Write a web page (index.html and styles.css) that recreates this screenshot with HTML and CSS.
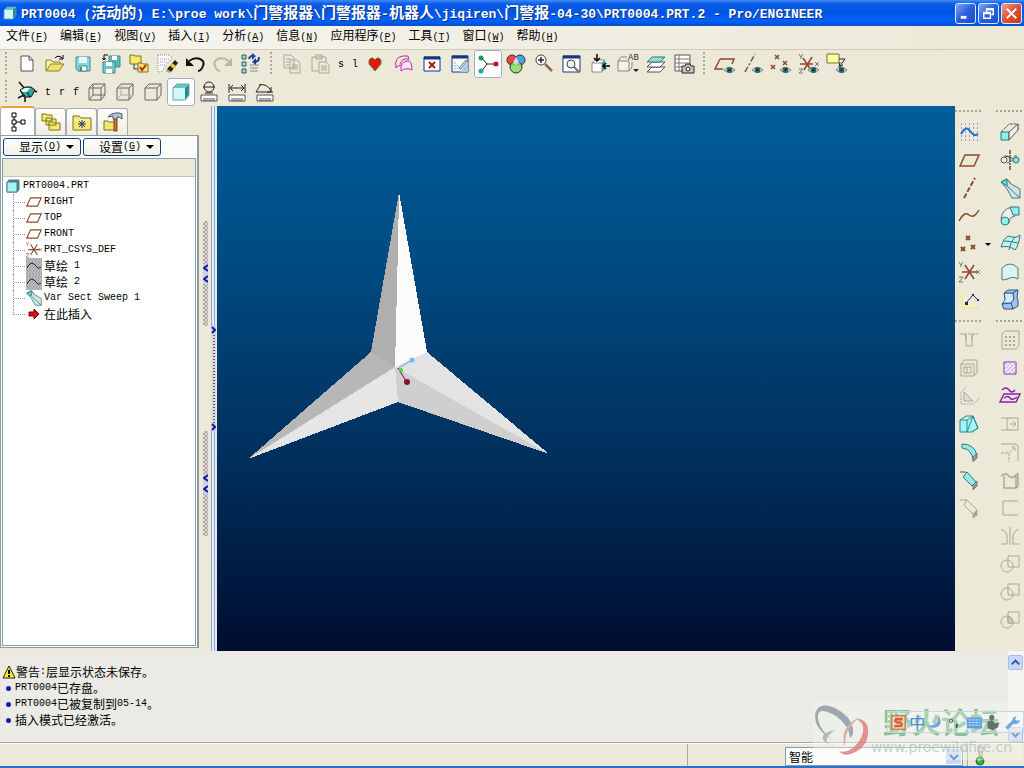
FILE: index.html
```html
<!DOCTYPE html>
<html lang="zh-CN">
<head>
  <meta charset="UTF-8">
  <meta name="viewport" content="width=device-width, initial-scale=1.0">
  <title>PRT0004 - Pro/ENGINEER</title>
  <link rel="stylesheet" href="styles.css">
</head>
<body>
  <!-- shared icons -->
  <svg class="defs" width="0" height="0">
    <symbol id="eye" viewBox="0 0 24 24"><path d="M11 18q5-5 11 0q-5 5-11 0z" fill="#fff" stroke="#777"/><circle cx="16.500" cy="18" r="3" fill="#266b66"/><circle cx="16.500" cy="18" r="1" fill="#012"/></symbol>
    <symbol id="plane" viewBox="0 0 24 24"><path d="M8 7h14l-5 11H3z" fill="none" stroke="#8a4a2c" stroke-width="1.500"/></symbol>
    <symbol id="csys" viewBox="0 0 24 24"><path d="M5 12h15M8 5l9 14M17 5L8 19" stroke="#8a4a2c" stroke-width="1.500" fill="none"/><path d="M2 2l2 3 2-3M4 5v2M19 10l4 4m0-4l-4 4M2 17h4l-4 5h4" stroke="#777" fill="none"/></symbol>
    <symbol id="cube" viewBox="0 0 24 24"><path d="M4 8h12v12H4zM4 8l4-4h12l-4 4M20 4v11l-4 5" fill="none" stroke="#666"/></symbol>
    <symbol id="solid" viewBox="0 0 24 24"><path d="M4 8l4-4h12l-4 4z" fill="#62c8c8"/><path d="M4 8h12v12H4z" fill="#d0f8f8"/><path d="M16 8l4-4v11l-4 5z" fill="#1f8f90"/><path d="M4 8l4-4h12v11l-4 5H4z" fill="none" stroke="#7a9aa4"/></symbol>
    <symbol id="ruler" viewBox="0 0 24 24"><path d="M4 15h16v6H4z" fill="#fff" stroke="#555"/><path d="M7 18v3M9 18v3M11 18v3M13 18v3M15 18v3M17 18v3" stroke="#555"/></symbol>
    <symbol id="folder" viewBox="0 0 24 24"><path d="M3 8V6h6l2 2h10v12H3z" fill="#f4e96c" stroke="#7a7421"/><path d="M4 10h16" stroke="#fffbd0"/></symbol>
    <symbol id="sketch" viewBox="0 0 16 16"><rect width="16" height="16" fill="#b8b8b8"/><path d="M1 1h15M0 3h16M1 5h15M0 7h16M1 9h15M0 11h16M1 13h15M0 15h16" stroke="#8c8c8c" stroke-dasharray="1 2"/><path d="M1 10q4-8 8-3t6 2" fill="none" stroke="#222"/></symbol>
    <symbol id="sweep" viewBox="0 0 24 24"><path d="M3 6l6-3 4 5 9 5v9h-8L9 13z" fill="#cbe6ea" stroke="#577"/><path d="M3 6l6-3v7z" fill="#5fdede" stroke="#377"/><path d="M9 10l13 12M9 3l4 5" stroke="#577" fill="none"/></symbol>
    <symbol id="boole" viewBox="0 0 24 24"><path d="M10 4h11v11H10z"/><circle cx="9" cy="14" r="6"/></symbol>
  </svg>

  <header class="titlebar">
    <svg class="app-icon" viewBox="0 0 24 24"><use href="#solid"/></svg>
    <h1>PRT0004 (<span class="zh">活动的</span>) E:\proe work\<span class="zh">门警报器</span>\<span class="zh">门警报器</span>-<span class="zh">机器人</span>\jiqiren\<span class="zh">门警报</span>-04-30\PRT0004.PRT.2 - Pro/ENGINEER</h1>
    <div class="win-buttons">
      <button aria-label="最小化"><svg viewBox="0 0 20 20"><path d="M5 14h6" stroke="#fff" stroke-width="3"/></svg></button>
      <button aria-label="还原"><svg viewBox="0 0 20 20"><path d="M5 9h7v6H5zM5 10h7M8 8V5h7v6h-2M8 6h7" fill="none" stroke="#fff" stroke-width="1.500"/></svg></button>
      <button class="close" aria-label="关闭"><svg viewBox="0 0 20 20"><path d="M5 5l10 10M15 5L5 15" stroke="#fff" stroke-width="2"/></svg></button>
    </div>
  </header>

  <nav class="menubar">
    <button><span class="zh">文件</span>(<u>F</u>)</button>
    <button><span class="zh">编辑</span>(<u>E</u>)</button>
    <button><span class="zh">视图</span>(<u>V</u>)</button>
    <button><span class="zh">插入</span>(<u>I</u>)</button>
    <button><span class="zh">分析</span>(<u>A</u>)</button>
    <button><span class="zh">信息</span>(<u>N</u>)</button>
    <button><span class="zh">应用程序</span>(<u>P</u>)</button>
    <button><span class="zh">工具</span>(<u>T</u>)</button>
    <button><span class="zh">窗口</span>(<u>W</u>)</button>
    <button><span class="zh">帮助</span>(<u>H</u>)</button>
  </nav>

  <div class="toolbars">
    <div class="toolbar">
      <i class="handle"></i>
      <button class="tool" aria-label="新建"><svg viewBox="0 0 24 24"><path d="M6 4h8l4 4v11H6z" fill="#fff" stroke="#555"/><path d="M14 4v4h4" fill="none" stroke="#555"/></svg></button>
      <button class="tool" aria-label="打开"><svg viewBox="0 0 24 24"><path d="M3 19V8h5l2 2h7v3" fill="#f7ee9a" stroke="#8a8130"/><path d="M3 19l5-7h13l-5 7z" fill="#f0e070" stroke="#8a8130"/><path d="M12 6q4-4 8 1M20 3v4h-4" fill="none" stroke="#000"/></svg></button>
      <button class="tool" aria-label="保存"><svg viewBox="0 0 24 24"><path d="M5 5h14v14H7l-2-2z" fill="#7fdce0" stroke="#4a8890"/><path d="M8 5h8v6H8z" fill="#e8f8f8"/><path d="M8 14h8v5H8z" fill="#fff" stroke="#4a8890"/><path d="M9 15h2v4H9z" fill="#4a8890"/></svg></button>
      <button class="tool" aria-label="保存副本"><svg viewBox="0 0 24 24"><path d="M10 4h11v11H10z" fill="#52b8bb" stroke="#4a8890"/><path d="M13 4h5v4h-5z" fill="#fff"/><path d="M4 10h12v11H4z" fill="#6cc8cc" stroke="#4a8890"/><path d="M7 10h6v4H7zM7 17h6v4H7z" fill="#fff"/><path d="M9 3H5v5M3 6l2 2 2-2" fill="none" stroke="#000"/></svg></button>
      <button class="tool" aria-label="设置工作目录"><svg viewBox="0 0 24 24"><path d="M3 12V3h4l1 1h6v8z" fill="#f4e96c" stroke="#7a7421"/><path d="M7 12v5h4" fill="none" stroke="#333"/><path d="M11 20v-9h4l1 1h5v8z" fill="#f4e96c" stroke="#7a7421"/><path d="M13 15l2 3 4-5" fill="none" stroke="#b22" stroke-width="2"/></svg></button>
      <button class="tool" aria-label="拭除"><svg viewBox="0 0 24 24"><path d="M3 3h11l3 3L6 20H3z" fill="#fafafa" stroke="#88a" stroke-dasharray="1 1"/><path d="M5 7h9M5 10h8M5 13h5" stroke="#99b" stroke-dasharray="1 1"/><path d="M20 8l3 3-7 9-4-3z" fill="#222"/><path d="M17 11l4 3-2 3-4-3z" fill="#e2c93a"/><path d="M12 17l4 3-2 1-3-2z" fill="#79c048"/></svg></button>
      <button class="tool" aria-label="撤消"><svg viewBox="0 0 24 24"><path d="M6 9q6-4 11-2t3 7-5 5" fill="none" stroke="#111" stroke-width="2"/><path d="M3 6v8h8z" fill="#111"/></svg></button>
      <button class="tool" aria-label="重做"><svg viewBox="0 0 24 24"><path d="M18 9Q12 5 7 7t-3 7 5 5" fill="none" stroke="#b9b6a8" stroke-width="2"/><path d="M21 6v8h-8z" fill="#b9b6a8"/></svg></button>
      <button class="tool" aria-label="再生"><svg viewBox="0 0 24 24"><path d="M3 3h4v4H3zM3 10h4v4H3zM3 17h4v4H3z" fill="#8fe0e0" stroke="#355"/><path d="M11 13h9M11 16h8M11 19h8" stroke="#888"/><path d="M10 7q1-4 5-3M20 5q0 5-5 5" fill="none" stroke="#1b3fa0" stroke-width="2"/><path d="M13 1l4 3-4 4zM17 6l-4 4 4 3z" fill="#1b3fa0"/></svg></button>
      <i class="handle"></i>
      <button class="tool" aria-label="复制"><svg viewBox="0 0 24 24" class="off"><path d="M4 3h7l3 3v10H4zM10 8h7l3 3v10H10z"/><path d="M6 7h5M6 10h3M6 13h3M12 13h6M12 15h6M12 17h6"/></svg></button>
      <button class="tool" aria-label="粘贴"><svg viewBox="0 0 24 24" class="off"><path d="M4 5h14v14H4zM8 3h6v4H8z"/><path d="M11 10h7l3 3v8H11zM13 14h6M13 16h6M13 18h6" fill="#ece9d8"/></svg></button>
      <button class="letter">s</button>
      <button class="letter">l</button>
      <button class="tool" aria-label="收藏"><svg viewBox="0 0 24 24"><path d="M11 19L5 12V8l2-2h2l2 2 2-2h2l2 2v4z" fill="#e8141c" stroke="#5a8a20"/></svg></button>
      <button class="tool" aria-label="曲面"><svg viewBox="0 0 24 24"><path d="M4 16Q2 5 11 4h5l1 4" fill="none" stroke="#c026a8"/><path d="M4 16q2-3 5-3M8 12q2-6 8-5" fill="none" stroke="#c026a8"/><path d="M9 19q-1-10 7-10 4 0 4 9-6-3-11 1z" fill="#f3e6f4" stroke="#c026a8"/></svg></button>
      <button class="tool" aria-label="关闭窗口"><svg viewBox="0 0 24 24"><path d="M4 5h16v14H4z" fill="#fff" stroke="#16357c"/><path d="M4 6h16" stroke="#16357c" stroke-width="3"/><path d="M9 10l6 6M15 10l-6 6" stroke="#a02010" stroke-width="2"/></svg></button>
      <button class="tool" aria-label="重画"><svg viewBox="0 0 24 24"><path d="M4 4h16v16H4z" fill="#f2f8ff" stroke="#16357c"/><path d="M4 5h16" stroke="#16357c" stroke-width="3"/><path d="M12 20l8-10v10z" fill="#a8c8ea"/><path d="M11 16l7-8 1 1-6 8z" fill="#dfe8f0" stroke="#678"/><path d="M6 10l5 5M6 13l4 4M6 16l2 2" stroke="#68a" stroke-dasharray="1 1"/></svg></button>
      <button class="tool active" aria-label="旋转中心"><svg viewBox="0 0 24 24"><path d="M5 5l6 7-6 8M11 12h9" fill="none" stroke="#222"/><circle cx="5" cy="6" r="2.500" fill="#1a9b53"/><circle cx="5" cy="19" r="2.500" fill="#22a79a"/><circle cx="20" cy="12" r="2.500" fill="#b81525"/></svg></button>
      <button class="tool" aria-label="外观"><svg viewBox="0 0 24 24"><circle cx="8" cy="8" r="5" fill="#e8483e" stroke="#333"/><circle cx="16" cy="8" r="5" fill="#4aa0e0" stroke="#333"/><circle cx="12" cy="15" r="6" fill="#86dc6a" fill-opacity=".85" stroke="#333"/><path d="M12 5l3 5-3 3-3-3z" fill="#eecbee"/></svg></button>
      <button class="tool" aria-label="放大"><svg viewBox="0 0 24 24"><circle cx="9" cy="8" r="5" fill="#fff" stroke="#444"/><path d="M6 8h6M9 5v6" stroke="#222" stroke-width="1.500"/><path d="M13 12l7 7" stroke="#8b6a4c" stroke-width="2.500"/></svg></button>
      <button class="tool" aria-label="重新调整"><svg viewBox="0 0 24 24"><path d="M3 4h17v16H3z" fill="#fff" stroke="#16357c"/><path d="M3 5h17" stroke="#16357c" stroke-width="3"/><circle cx="11" cy="12" r="4" fill="#eef" stroke="#444"/><path d="M14 15l5 5" stroke="#8b6a4c" stroke-width="2"/></svg></button>
      <button class="tool" aria-label="重定向"><svg viewBox="0 0 24 24"><path d="M4 11h10v9H4zM4 11l3-3h10l-3 3" fill="#fff" stroke="#888"/><path d="M14 11l3-3v9l-3 3z" fill="#2aa9a5"/><path d="M9 2v7M6 6l3 3 3-3M22 14h-7M18 11l-3 3 3 3" fill="none" stroke="#000" stroke-width="1.500"/></svg></button>
      <button class="tool" aria-label="已命名视图"><svg viewBox="0 0 24 24"><path d="M2 9h11v10H2zM2 9l3-4h6M13 19l3-4v-5" fill="#f4f2e8" stroke="#888"/><path d="M17 17h6l-3 3z" fill="#222"/><text x="12" y="8" class="ico-text">AB</text></svg></button>
      <button class="tool" aria-label="层"><svg viewBox="0 0 24 24"><path d="M3 20l5-5h13l-5 5z" fill="#fff" stroke="#555"/><path d="M3 15l5-5h13l-5 5z" fill="#fff" stroke="#555"/><path d="M3 10l5-5h13l-5 5z" fill="#8fdede" stroke="#376"/></svg></button>
      <button class="tool" aria-label="视图管理器"><svg viewBox="0 0 24 24"><path d="M3 3h15v16H3z" fill="#fff" stroke="#555"/><path d="M3 7h15M3 11h15M3 15h15M7 3v16" stroke="#777"/><path d="M10 14h3l1-2h4l1 2h3v7H10z" fill="#c8c5b8" stroke="#222"/><circle cx="16" cy="17" r="2" fill="#fff" stroke="#222"/></svg></button>
      <i class="handle"></i>
      <button class="tool" aria-label="基准平面开关"><svg viewBox="0 0 24 24"><path d="M7 7h14l-2 5M7 7L2 17h8" fill="none" stroke="#8a4a2c" stroke-width="1.500"/><use href="#eye"/></svg></button>
      <button class="tool" aria-label="基准轴开关"><svg viewBox="0 0 24 24"><path d="M4 20L14 2" stroke="#8a4a2c" stroke-width="1.500" stroke-dasharray="6 2 2 2"/><use href="#eye"/></svg></button>
      <button class="tool" aria-label="基准点开关"><svg viewBox="0 0 24 24"><path d="M6 3l4 4m0-4L6 7M14 9l4 4m0-4l-4 4M2 13l4 4m0-4l-4 4" stroke="#8a4a2c" stroke-width="1.500"/><use href="#eye"/></svg></button>
      <button class="tool" aria-label="坐标系开关"><svg viewBox="0 0 24 24"><path d="M3 12h13M6 6l8 12M15 5L7 18" stroke="#8a4a2c" stroke-width="1.500"/><path d="M2 2l2 3 2-3M4 5v2M18 10l4 4m0-4l-4 4M2 17h4l-4 4h4" stroke="#777" fill="none"/><use href="#eye"/></svg></button>
      <button class="tool" aria-label="注释开关"><svg viewBox="0 0 24 24"><path d="M2 2h12v9H2z" fill="#ffffa0" stroke="#77713a"/><path d="M14 7h6l-5 7M18 13l-4 2 1-5" fill="none" stroke="#222"/><use href="#eye"/></svg></button>
    </div>

    <div class="toolbar">
      <i class="handle"></i>
      <button class="tool" aria-label="旋转"><svg viewBox="0 0 24 24"><path d="M4 2l6 7M17 10l5 2M3 18l6-3M10 16v6" stroke="#111" stroke-width="1.500"/><path d="M5 10l5-3h6l4 3-4 7H9z" fill="#2aa9a5" stroke="#111"/><path d="M6 10l4-2h5l-3 4H7z" fill="#eef8f8"/><path d="M12 12l3 5M5 10l5 6" stroke="#111"/></svg></button>
      <button class="letter">t</button>
      <button class="letter">r</button>
      <button class="letter">f</button>
      <button class="tool" aria-label="线框"><svg viewBox="0 0 24 24"><use href="#cube"/><path d="M8 4v11l-4 5M8 15h12" fill="none" stroke="#666"/></svg></button>
      <button class="tool" aria-label="隐藏线"><svg viewBox="0 0 24 24"><use href="#cube"/><path d="M8 4v11l-4 5M8 15h12" fill="none" stroke="#b4b2a8"/></svg></button>
      <button class="tool" aria-label="无隐藏线"><svg viewBox="0 0 24 24"><use href="#cube"/></svg></button>
      <button class="tool active" aria-label="着色"><svg viewBox="0 0 24 24"><use href="#solid"/></svg></button>
      <button class="tool" aria-label="直径"><svg viewBox="0 0 24 24"><use href="#ruler"/><circle cx="12" cy="7" r="5" fill="none" stroke="#222"/><path d="M6 7h12M8 13h8" stroke="#222"/></svg></button>
      <button class="tool" aria-label="距离"><svg viewBox="0 0 24 24"><use href="#ruler"/><path d="M4 4v9M20 4v9M5 8h14M8 5L5 8l3 3M16 5l3 3-3 3" fill="none" stroke="#222"/></svg></button>
      <button class="tool" aria-label="角度"><svg viewBox="0 0 24 24"><use href="#ruler"/><path d="M3 12h17M3 12l5-8M6 5q8-2 12 6M18 7v5h-4" fill="none" stroke="#222"/></svg></button>
    </div>
  </div>

  <main class="workspace">
    <aside class="navigator">
      <div class="tabs">
        <button class="tab current" aria-label="模型树"><svg viewBox="0 0 24 24"><path d="M6 3h4v4H6zM6 10h4v4H6zM6 17h4v4H6zM15 10h4v4h-4z" fill="#fff" stroke="#000"/><path d="M8 7v3M8 14v3M10 12h5" stroke="#000"/></svg></button>
        <button class="tab" aria-label="文件夹浏览器"><svg viewBox="0 0 24 24"><path d="M3 11V4h4l1 1h5v6zM7 15V8h4l1 1h5v6zM10 20v-8h4l1 1h6v7z" fill="#f4e96c" stroke="#7a7421"/></svg></button>
        <button class="tab" aria-label="收藏夹"><svg viewBox="0 0 24 24"><use href="#folder"/><path d="M8 14h8M12 10v8M9 11l6 6M15 11l-6 6" stroke="#1b2f90"/></svg></button>
        <button class="tab" aria-label="连接"><svg viewBox="0 0 24 24"><path d="M3 20v-9h4l1 1h6v8z" fill="#f4e96c" stroke="#7a7421"/><path d="M13 8h3v13h-3z" fill="#c8743a" stroke="#7a3c18"/><path d="M7 7q3-4 8-4h3l3 1v5l-3-2h-2v2h-4V6z" fill="#b8ccd8" stroke="#456"/></svg></button>
      </div>
      <div class="nav-panel">
        <div class="nav-buttons">
          <button><span class="zh">显示</span>(<u>O</u>)<i class="drop"></i></button>
          <button><span class="zh">设置</span>(<u>G</u>)<i class="drop"></i></button>
        </div>
        <div class="tree-box">
          <div class="tree-head"></div>
          <div class="tree-root"><svg viewBox="0 0 16 16"><path d="M2 4l2-2h10v10l-2 2H2z" fill="#3a8f94" stroke="#578"/><path d="M2 4h10v10H2z" fill="#a4f4f6" stroke="#578"/></svg>PRT0004.PRT</div>
          <ul class="tree">
            <li><svg viewBox="2 2 21 21"><use href="#plane" width="24" height="24"/></svg>RIGHT</li>
            <li><svg viewBox="2 2 21 21"><use href="#plane" width="24" height="24"/></svg>TOP</li>
            <li><svg viewBox="2 2 21 21"><use href="#plane" width="24" height="24"/></svg>FRONT</li>
            <li><svg viewBox="2 2 21 21"><use href="#csys" width="24" height="24"/></svg>PRT_CSYS_DEF</li>
            <li><svg viewBox="0 0 16 16"><use href="#sketch"/></svg><span class="zh">草绘</span>&nbsp;1</li>
            <li><svg viewBox="0 0 16 16"><use href="#sketch"/></svg><span class="zh">草绘</span>&nbsp;2</li>
            <li><svg viewBox="2 2 21 21"><use href="#sweep" width="24" height="24"/></svg>Var Sect Sweep 1</li>
            <li><svg viewBox="0 0 16 16"><path d="M3 6h5V3l5 5-5 5v-3H3z" fill="#d8101c" stroke="#700"/></svg><span class="zh">在此插入</span></li>
          </ul>
        </div>
      </div>
    </aside>

    <div class="rail">
      <div class="grip"><svg viewBox="0 0 5 20"><path d="M5 1L1 4l4 3M5 12l-4 3 4 3"/></svg></div>
      <div class="grip-space"></div>
      <div class="grip"><svg viewBox="0 0 5 20"><path d="M5 1L1 4l4 3M5 12l-4 3 4 3"/></svg></div>
    </div>
    <div class="sash">
      <div class="sash-grip">
        <svg viewBox="0 0 5 8"><path d="M1 1l3 3-3 3"/></svg>
        <svg viewBox="0 0 5 8"><path d="M1 1l3 3-3 3"/></svg>
      </div>
    </div>

    <section class="viewport">
      <svg class="model">
        <polygon points="182,86 154,246 178,261 181,140" fill="#afafaf"/>
        <polygon points="182,86 181,140 178,261 210,246" fill="#fbfbfb"/>
        <polygon points="154,246 178,261 31,353" fill="#b7b7b7"/>
        <polygon points="178,261 181,296 31,353" fill="#e5e5e5"/>
        <polygon points="210,246 178,261 332,348" fill="#e3e3e3"/>
        <polygon points="178,261 332,348 181,296" fill="#cfcfcf"/>
        <path d="M182 262l13-8" stroke="#5a9cc8"/>
        <path d="M181 262l8 13" stroke="#5c1030"/>
        <circle cx="195" cy="254" r="2.500" fill="#7ab8ea"/>
        <circle cx="184" cy="264" r="2" fill="#3fdc3f"/>
        <circle cx="190" cy="276" r="3" fill="#8e0c3a"/>
      </svg>
    </section>

    <aside class="features">
      <div class="feature-col">
        <i class="handle-h"></i>
        <button class="tool" aria-label="草绘"><svg viewBox="0 0 24 24"><path d="M4 4h17M4 8h17M4 12h17M4 16h17M4 20h17" stroke="#3a5fa8" stroke-dasharray="1 3"/><path d="M4 14q5-9 9-3t8 3" fill="none" stroke="#1f6fd0" stroke-width="2"/></svg></button>
        <button class="tool" aria-label="平面"><svg viewBox="0 0 24 24"><use href="#plane"/></svg></button>
        <button class="tool" aria-label="轴"><svg viewBox="0 0 24 24"><path d="M7 22L18 2" stroke="#8a4a2c" stroke-width="2" stroke-dasharray="5 2"/></svg></button>
        <button class="tool" aria-label="曲线"><svg viewBox="0 0 24 24"><path d="M2 17q5-10 10-6t10-5" fill="none" stroke="#8a4a2c" stroke-width="1.500"/></svg></button>
        <button class="tool" aria-label="点"><svg viewBox="0 0 24 24"><path d="M9 4l4 4m0-4l-4 4M4 15l4 4m0-4l-4 4M14 13l4 4m0-4l-4 4" stroke="#8a4a2c" stroke-width="2"/></svg><i class="drop"></i></button>
        <button class="tool" aria-label="坐标系"><svg viewBox="0 0 24 24"><use href="#csys"/></svg></button>
        <button class="tool" aria-label="分析特征"><svg viewBox="0 0 24 24"><path d="M4 4l18 17H4z" fill="#fbf7a0" fill-opacity=".5"/><path d="M5 4v16h17" fill="none" stroke="#e4d850" stroke-dasharray="1 1"/><path d="M9 15l7-8 5 5" fill="none" stroke="#1c1c90"/><path d="M8 14h3v3H8zM15 6h2v2h-2zM20 11h2v2h-2z" fill="#1c1c90"/></svg></button>
        <i class="handle-h"></i>
        <button class="tool" aria-label="孔"><svg viewBox="0 0 24 24" class="off"><path d="M3 6h18" stroke-dasharray="3 1"/><path d="M6 6q3 1 3 4v8h6v-8q0-3 3-4M9 12V6M15 12V6"/></svg></button>
        <button class="tool" aria-label="壳"><svg viewBox="0 0 24 24" class="off"><path d="M4 8h13v12H4zM4 8l3-4h13v12l-3 4M7 11h7v6H7zM10 11v6"/></svg></button>
        <button class="tool" aria-label="筋"><svg viewBox="0 0 24 24" class="off"><path d="M3 10l6-7M4 11v9h12l7-6" stroke-dasharray="2 1"/><path d="M7 8v9h9z" fill="#ddd"/></svg></button>
        <button class="tool" aria-label="拔模"><svg viewBox="0 0 24 24"><path d="M3 8h7l6-4 5 12-6 4H3z" fill="#a6f2f2" stroke="#1d8f92"/><path d="M10 8v12l6-16 5 12-6 4M3 8l6-4h7" fill="none" stroke="#1d8f92"/></svg></button>
        <button class="tool" aria-label="倒圆角"><svg viewBox="0 0 24 24"><path d="M5 4q12 0 15 11l-4 5Q15 9 5 8z" fill="#93ecec" stroke="#377"/><path d="M20 13v5l-4 4v-5z" fill="#999" stroke="#777"/></svg></button>
        <button class="tool" aria-label="倒角"><svg viewBox="0 0 24 24"><path d="M10 4l9 10-4 4-9-9z" fill="#93ecec" stroke="#377"/><path d="M20 13v5l-4 4v-5z" fill="#999" stroke="#777"/><path d="M3 4h6" stroke="#555"/></svg></button>
        <button class="tool" aria-label="拐角倒角"><svg viewBox="0 0 24 24" class="off"><path d="M3 4h7l10 10-4 4-9-9 3-5"/><path d="M20 14v5l-4 3v-4z" fill="#aaa79a"/></svg></button>
      </div>
      <div class="feature-col">
        <i class="handle-h"></i>
        <button class="tool" aria-label="拉伸"><svg viewBox="0 0 24 24"><path d="M3 12l8-8h9v6l-8 8" fill="none" stroke="#555" stroke-dasharray="3 1"/><path d="M3 12h8v8H3z" fill="#8ff0f0" stroke="#377"/><path d="M11 12l9-8v6l-9 10z" fill="#eee" stroke="#555"/></svg></button>
        <button class="tool" aria-label="旋转"><svg viewBox="0 0 24 24"><path d="M12 2v20" stroke="#000" stroke-dasharray="4 1 2 1"/><path d="M6 8h3l7 3M16 8h3M9 15l7-3" stroke="#666"/><circle cx="6" cy="12" r="3" fill="#eee" stroke="#555"/><circle cx="18" cy="12" r="3" fill="#8fdede" stroke="#377"/></svg></button>
        <button class="tool" aria-label="可变剖面扫描"><svg viewBox="0 0 24 24"><use href="#sweep"/></svg></button>
        <button class="tool" aria-label="边界混合"><svg viewBox="0 0 24 24"><path d="M3 15Q4 5 14 3l3 9q-6 1-6 7z" fill="#eee" stroke="#666"/><path d="M12 3h9v8h-6z" fill="#8ff0f0" stroke="#377"/><circle cx="7" cy="17" r="4" fill="#8ff0f0" stroke="#377"/></svg></button>
        <button class="tool" aria-label="造型"><svg viewBox="0 0 24 24"><path d="M3 15q3-10 8-11 6 3 11-1-1 10-5 15-6-5-14-3z" fill="#c0f2f2" stroke="#377"/><path d="M11 18q1-8 6-13M6 9q6 0 14 2" fill="none" stroke="#377"/></svg></button>
        <button class="tool" aria-label="填充"><svg viewBox="0 0 24 24"><path d="M4 8q8-8 16 0v11q-4-3-8-1t-8 2z" fill="#daf4f4" stroke="#577"/></svg></button>
        <button class="tool" aria-label="自由形状"><svg viewBox="0 0 24 24"><path d="M6 5l4-3h10l-1 7 1 4v5l-5 3H6l-2-5 3-4z" fill="#9cc6ee" stroke="#357"/><path d="M6 5h9l5-3M15 5l1 6-3 4 2 6M4 16l9-1" fill="none" stroke="#357"/><path d="M7 6h7l1 5-2 3H6l2-3z" fill="#d4e9fb"/></svg></button>
        <i class="handle-h"></i>
        <button class="tool" aria-label="阵列"><svg viewBox="0 0 24 24" class="off"><path d="M4 6l3-3h14v14l-3 4H4z"/><path d="M7 9h12M7 13h12M7 17h12" stroke-width="2" stroke-dasharray="2 2"/></svg></button>
        <button class="tool" aria-label="填充曲面"><svg viewBox="0 0 24 24"><path d="M6 6h12v12H6z" fill="#f2e6fa" stroke="#7a2fc0"/><path d="M6 10l4-4M6 14l8-8M6 18L18 6M10 18l8-8M14 18l4-4" stroke="#c3a4e4"/></svg></button>
        <button class="tool" aria-label="投影"><svg viewBox="0 0 24 24"><path d="M4 6q4-4 7 0t6 0M6 14q4-3 6 0t7-1" fill="none" stroke="#8a1fb0" stroke-width="1.500"/><path d="M6 10h16l-4 8H2z" fill="none" stroke="#8a1fb0" stroke-width="1.500"/></svg></button>
        <button class="tool" aria-label="延伸"><svg viewBox="0 0 24 24" class="off"><path d="M3 6h17v12H3M9 6v12M12 12h6M15 9l3 3-3 3"/></svg></button>
        <button class="tool" aria-label="偏移"><svg viewBox="0 0 24 24" class="off"><path d="M3 4h15l2 2v15" /><path d="M3 13h8v9M11 13l6-6M17 11V7h-4" stroke-dasharray="3 1"/></svg></button>
        <button class="tool" aria-label="加厚"><svg viewBox="0 0 24 24" class="off"><path d="M6 8v12h12V8M18 20l2-2V6M3 8q5-4 8 0t9-3" stroke-width="1.500"/></svg></button>
        <button class="tool" aria-label="实体化"><svg viewBox="0 0 24 24" class="off"><path d="M20 5H5v14h15"/></svg></button>
        <button class="tool" aria-label="镜像"><svg viewBox="0 0 24 24" class="off"><path d="M12 3v18M3 6h2q4 2 4 6v8H3M21 6h-2q-4 2-4 6v8h6"/></svg></button>
        <button class="tool" aria-label="合并"><svg viewBox="0 0 24 24" class="off"><use href="#boole"/></svg></button>
        <button class="tool" aria-label="修剪"><svg viewBox="0 0 24 24" class="off"><use href="#boole"/></svg></button>
        <button class="tool" aria-label="相交"><svg viewBox="0 0 24 24" class="off"><use href="#boole"/><path d="M10 8l4 3 1 4h-5z" fill="#ccc9bb"/></svg></button>
      </div>
    </aside>
  </main>

  <section class="messages">
    <ul>
      <li><svg viewBox="0 0 14 14"><path d="M7 1l6 12H1z" fill="#fdf51c" stroke="#222"/><path d="M7 5v4M7 10v2" stroke="#000" stroke-width="2"/></svg><span class="zh">警告</span>:<span class="zh">层显示状态未保存。</span></li>
      <li><i class="dot"></i>PRT0004<span class="zh">已存盘。</span></li>
      <li><i class="dot"></i>PRT0004<span class="zh">已被复制到</span>05-14<span class="zh">。</span></li>
      <li><i class="dot"></i><span class="zh">插入模式已经激活。</span></li>
    </ul>
    <div class="scrollbar">
      <button aria-label="向上"><svg viewBox="0 0 14 14"><path d="M3 9l4-4 4 4"/></svg></button>
      <button aria-label="向下"><svg viewBox="0 0 14 14"><path d="M3 5l4 4 4-4"/></svg></button>
    </div>
  </section>

  <footer class="statusbar">
    <div class="status-text"></div>
    <div class="status-filter">
      <div class="combo">
        <select aria-label="过滤器"><option>智能</option></select>
        <svg viewBox="0 0 15 15"><path d="M4 6l4 4 4-4"/></svg>
      </div>
    </div>
    <div class="status-light">
      <svg viewBox="0 0 12 20"><path d="M4 1h5v5H4z" fill="#ddd" stroke="#888"/><path d="M5 6h3v5H5z" fill="#e6d64a" stroke="#888"/><circle cx="6" cy="15" r="4" fill="#35b148" stroke="#1c6a2a"/><circle cx="5" cy="14" r="1" fill="#c8f4cc"/></svg>
    </div>
  </footer>

  <div class="watermark">
    <svg viewBox="0 0 60 60">
      <path d="M4 8q6-8 20-1t17 19q2 8-3 11 0-9-9-18T9 9q-6 2-3 12t14 18Q7 32 3 21 1 12 4 8z" fill="#8797a2"/>
      <path d="M23 29q-13 2-13 8t13 8q-10-1-9-6t9-10z" fill="#a3adb3"/>
      <path d="M43 17q15 0 14 15T41 53q-9 4-14-2 9 2 17-6t8-17q0-8-9-11z" fill="#df7a7c"/>
      <path d="M33 46q-4-12 2-20t10-8q-6 6-9 12t-3 16z" fill="#d3a0a2"/>
    </svg>
    <div>
      <strong class="zh">野火论坛</strong>
      <span>www.proewildfire.cn</span>
    </div>
  </div>

  <div class="ime">
    <svg viewBox="0 0 20 20"><path d="M2 2h16v16H2z" fill="#f9e4cc" fill-opacity=".6" stroke="#c08a4c" stroke-width="2"/><path d="M15 6H7q-2 2 1 4h4q3 2 1 4H5" fill="none" stroke="#e2593c" stroke-width="3"/></svg>
    <span class="zh">中</span>
    <svg viewBox="0 0 20 20"><path d="M13 2q2 11-12 12 9 5 14-1 3-6-2-11z" fill="#6fa8e0"/></svg>
    <svg viewBox="0 0 20 20"><circle cx="6" cy="8" r="2" fill="none" stroke="#345"/><path d="M12 12q2 0 0 4" fill="none" stroke="#345" stroke-width="2"/></svg>
    <svg viewBox="0 0 20 20"><path d="M1 4h18v13H1z" fill="#5f9ee0"/><path d="M3 7h14M3 10h14M3 13h14" stroke="#e4f0ff" stroke-dasharray="3 1"/></svg>
    <svg viewBox="0 0 20 20"><circle cx="8" cy="4" r="3" fill="#68706c"/><path d="M3 9l5-2 4 4 5-1-2 6-6 3-6-2z" fill="#68706c"/></svg>
    <svg viewBox="0 0 20 20"><path d="M3 17l8-8" stroke="#6fa8e0" stroke-width="4"/><path d="M15 2l-4 2-2 5 3 3 5-1 2-4-4 1-2-2z" fill="#6fa8e0"/></svg>
  </div>
</body>
</html>
```
FILE: styles.css
```css
* {
  box-sizing: border-box;
}

body {
  margin: 0;
  height: 100vh;
  display: flex;
  flex-direction: column;
  overflow: hidden;
  background: #ece9d8;
  color: #000;
  font: 10px/16px "Liberation Mono", "Noto Sans CJK SC", monospace;
  border-bottom: 2px solid #2f6fc8;
}

button {
  font: inherit;
  color: inherit;
  border: 0;
  padding: 0;
  background: none;
}

ul {
  list-style: none;
  margin: 0;
  padding: 0;
}

svg {
  display: block;
  flex: none;
}

.defs {
  position: absolute;
}

.zh {
  font-family: "Noto Sans CJK SC", sans-serif;
  font-size: 12px;
}

/* title */
.titlebar {
  height: 26px;
  flex: none;
  display: flex;
  align-items: center;
  padding: 0 2px 0 1px;
  background: linear-gradient(#3f8cf8 0, #0a5be8 4px, #0054e3 12px, #0362fb 20px, #0450d0 100%);
  color: #fff;
}

.app-icon {
  width: 18px;
  height: 18px;
  margin-right: 2px;
}

.titlebar h1 {
  flex: 1;
  margin: 0;
  font-size: 13px;
  line-height: 20px;
  white-space: nowrap;
  text-shadow: 1px 1px #0a2f80;
}

.titlebar .zh {
  font-size: 15px;
}

.win-buttons {
  display: flex;
  gap: 2px;
}

.win-buttons button {
  width: 21px;
  height: 21px;
  border: 1px solid #dfe8fb;
  border-radius: 3px;
  background: linear-gradient(135deg, #7fa5f5, #2a5fdc 50%, #1c4fd0);
}

.win-buttons .close {
  background: linear-gradient(135deg, #f0a088, #dd5030 50%, #c03c14);
}

/* menu */
.menubar {
  height: 24px;
  flex: none;
  display: flex;
  align-items: center;
  gap: 12px;
  padding: 0 6px 2px;
  background: linear-gradient(90deg, #f6f5f0, #ece9d8);
  border-bottom: 1px solid #cfccbc;
}

.menubar button {
  white-space: nowrap;
}

/* toolbars */
.toolbars {
  flex: none;
}

.toolbar {
  display: flex;
  align-items: center;
  height: 28px;
}

.handle {
  width: 13px;
  height: 24px;
  flex: none;
  background: repeating-linear-gradient(#aaa798 0 2px, transparent 2px 4px) 5px 0 / 2px 100% no-repeat;
}

.tool {
  position: relative;
  width: 28px;
  height: 28px;
  flex: none;
  display: flex;
  align-items: center;
  justify-content: center;
}

.tool svg {
  width: 24px;
  height: 24px;
}

.tool.active {
  border: 1px solid #98b0cc;
  border-radius: 3px;
  background: #fff;
}

.letter {
  width: 14px;
  height: 20px;
  padding-top: 2px;
}

.off {
  fill: none;
  stroke: #aaa79a;
}

.ico-text {
  font-size: 9px;
  fill: #333;
}

.drop {
  display: inline-block;
  border: 4px solid transparent;
  border-top-color: #000;
  border-bottom: 0;
}

/* model tree */
.workspace {
  flex: 1;
  min-height: 0;
  display: flex;
}

.navigator {
  width: 199px;
  flex: none;
  display: flex;
  flex-direction: column;
  padding-bottom: 3px;
}

.tabs {
  display: flex;
  align-items: flex-end;
  height: 29px;
}

.tab {
  width: 31px;
  height: 27px;
  display: flex;
  align-items: center;
  justify-content: center;
  border: 1px solid #a5adb2;
  border-bottom: 0;
  border-radius: 3px 3px 0 0;
  background: linear-gradient(#fdfdfa, #f0eee2);
}

.tab.current {
  width: 35px;
  height: 29px;
  border-top: 2px solid #f0a030;
  background: #fff;
}

.tab svg {
  width: 24px;
  height: 24px;
}

.nav-panel {
  flex: 1;
  display: flex;
  flex-direction: column;
  border: 1px solid #919b9c;
  border-right-width: 2px;
  background: #fcfcfa;
  padding: 2px 1px 1px;
}

.nav-buttons {
  display: flex;
  gap: 2px;
  padding-left: 1px;
}

.nav-buttons button {
  width: 78px;
  height: 18px;
  display: flex;
  align-items: center;
  justify-content: flex-end;
  padding-right: 6px;
  border: 1px solid #123f78;
  border-radius: 3px;
  background: linear-gradient(#fff, #f0efe6);
}

.nav-buttons .drop {
  margin-left: 5px;
}

.tree-box {
  flex: 1;
  margin-top: 2px;
  border: 1px solid #7f9db9;
  background: #fff;
}

.tree-head {
  height: 18px;
  margin-bottom: 1px;
  background: #ece9d8;
  border-bottom: 1px solid #c9c5b2;
}

.tree-root {
  display: flex;
  align-items: center;
  padding-left: 2px;
}

.tree-root svg {
  width: 16px;
  height: 16px;
  margin-right: 2px;
}

.tree {
  padding-left: 10px;
}

.tree li {
  display: flex;
  align-items: center;
  height: 16px;
  white-space: pre;
}

.tree li::before {
  content: "";
  width: 12px;
  height: 16px;
  border-left: 1px dotted #999;
  background: repeating-linear-gradient(90deg, #999 0 1px, transparent 1px 2px) 0 8px / 100% 1px no-repeat;
}

.tree li:last-child::before {
  height: 9px;
  align-self: flex-start;
}

.tree svg {
  width: 16px;
  height: 16px;
  margin-right: 2px;
}

/* splitters */
.rail {
  width: 12px;
  flex: none;
  display: flex;
  flex-direction: column;
  align-items: center;
  justify-content: center;
}

.grip,
.sash-grip,
.grip-space {
  width: 5px;
  height: 105px;
}

.grip {
  display: flex;
  align-items: center;
  background: repeating-conic-gradient(#aaa8a0 0 25%, #dcdad0 0 50%) 0 0 / 4px 4px;
}

.grip svg {
  width: 5px;
  height: 20px;
  background: #d0cfe0;
}

.grip path,
.sash-grip path {
  fill: none;
  stroke: #1414a0;
  stroke-width: 2;
}

.sash {
  width: 6px;
  flex: none;
  display: flex;
  align-items: center;
  background: linear-gradient(90deg, #8fa8d4 0 1px, #e4ecf8 1px 3px, #8fa8d4 3px 4px, #e4e8f0 4px);
}

.sash-grip {
  display: flex;
  flex-direction: column;
  justify-content: space-between;
  background:
    repeating-linear-gradient(#555 0 1px, transparent 1px 3px) center / 2px 100% no-repeat,
    #dcdcdc;
}

.sash-grip svg {
  width: 5px;
  height: 8px;
  background: #d0d0e4;
}

/* 3D view */
.viewport {
  flex: 1;
  min-width: 0;
  background: linear-gradient(#005d9b, #004a80 30%, #002f5c 65%, #000d30);
}

.model {
  width: 100%;
  height: 100%;
}

.model polygon {
  shape-rendering: crispEdges;
}

/* feature toolbar */
.features {
  width: 69px;
  flex: none;
  display: flex;
  justify-content: space-between;
  padding-top: 3px;
}

.feature-col {
  width: 28px;
}

.handle-h {
  display: block;
  height: 8px;
  margin-bottom: 1px;
  background: repeating-linear-gradient(90deg, #aaa798 0 2px, transparent 2px 4px) 0 1px / 100% 2px no-repeat;
}

.tool + .handle-h {
  height: 11px;
  background-position: 0 6px;
}

.feature-col .drop {
  position: absolute;
  left: 30px;
  border-width: 3px 3px 0;
}

/* messages */
.messages {
  flex: none;
  display: flex;
  justify-content: space-between;
  background: #ebeae4;
  border-bottom: 1px solid #aca899;
}

.messages ul {
  padding: 13px 0 14px 2px;
}

.messages li {
  display: flex;
  align-items: center;
  height: 16px;
}

.messages li svg {
  width: 14px;
  height: 14px;
}

.dot {
  width: 5px;
  height: 5px;
  margin: 0 4px;
  border-radius: 50%;
  background: #1818b4;
}

.scrollbar {
  width: 16px;
  display: flex;
  flex-direction: column;
  justify-content: space-between;
  padding-top: 4px;
  background: #f6f5f0;
}

.scrollbar button {
  width: 15px;
  height: 15px;
  border: 1px solid #a8bce8;
  border-radius: 2px;
  background: #c8d8fc;
}

.scrollbar path,
.combo path {
  fill: none;
  stroke: #3a5488;
  stroke-width: 2;
}

/* status */
.statusbar {
  flex: none;
  display: flex;
  height: 23px;
  border-top: 1px solid #fff;
}

.status-text {
  width: 688px;
  border-right: 1px solid #aca899;
}

.status-filter {
  flex: 1;
  display: flex;
  justify-content: flex-end;
  padding: 3px 4px 0 0;
  border-right: 1px solid #aca899;
}

.combo {
  position: relative;
  width: 178px;
  height: 19px;
}

.combo select {
  appearance: none;
  width: 100%;
  height: 100%;
  padding: 0 3px;
  border: 1px solid #7f9db9;
  border-radius: 0;
  background: #fff;
  color: #000;
  font: 12px/16px "Noto Sans CJK SC", sans-serif;
}

.combo svg {
  position: absolute;
  top: 2px;
  right: 2px;
  width: 15px;
  height: 15px;
  background: #c8d8fc;
  pointer-events: none;
}

.status-light {
  width: 56px;
  padding: 2px 0 0 6px;
}

.status-light svg {
  width: 12px;
  height: 20px;
}

/* site mark and floating input bar */
.watermark {
  position: absolute;
  right: 2px;
  bottom: 8px;
  display: flex;
  align-items: center;
  width: 209px;
  height: 59px;
  background: rgba(245, 247, 242, 0.4);
  pointer-events: none;
}

.watermark svg {
  width: 58px;
  height: 58px;
  opacity: 0.8;
}

.watermark div {
  display: flex;
  flex-direction: column;
  white-space: nowrap;
}

.watermark strong {
  padding-left: 12px;
  font-size: 29px;
  line-height: 32px;
  color: rgba(60, 165, 90, 0.6);
}

.watermark span {
  font: 14px/20px "DejaVu Sans", sans-serif;
  color: rgba(170, 190, 180, 0.7);
}

.ime {
  position: absolute;
  right: 0;
  bottom: 35px;
  width: 137px;
  height: 22px;
  display: flex;
  align-items: center;
  justify-content: space-between;
  padding: 0 2px;
  border: 1px solid #c8d4e0;
  background: rgba(248, 250, 252, 0.3);
}

.ime svg {
  width: 17px;
  height: 17px;
}

.ime .zh {
  color: #4a8ad8;
  font-size: 16px;
}
```
